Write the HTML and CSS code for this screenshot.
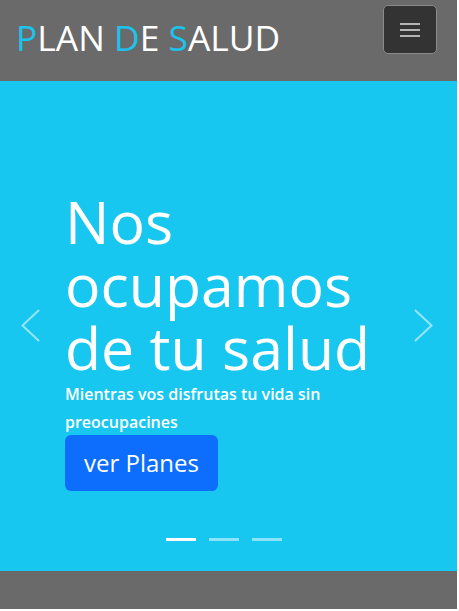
FILE: index.html
```html
<!DOCTYPE html>
<html lang="es">
<head>
<meta charset="utf-8">
<title>Plan de Salud</title>
<link rel="stylesheet" href="styles.css">
</head>
<body>
<div class="page">
  <nav class="navbar">
    <a class="brand" href="#"><span class="hl">P</span>LAN <span class="hl">D</span>E <span class="hl">S</span>ALUD</a>
    <button class="toggler" type="button" aria-label="Menu">
      <svg width="22" height="16" viewBox="0 0 22 16"><path d="M1 2h20M1 8h20M1 14h20" stroke="#b4b4b4" stroke-width="2" fill="none"/></svg>
    </button>
  </nav>
  <section class="hero">
    <button class="ctrl ctrl-prev" type="button" aria-label="Anterior">
      <svg width="19" height="33" viewBox="0 0 19 33"><polyline points="18,1 1.5,16.5 18,32" fill="none" stroke="rgba(255,255,255,0.55)" stroke-width="2"/></svg>
    </button>
    <div class="caption">
      <h1 class="title">Nos ocupamos de tu salud</h1>
      <p class="lead">Mientras vos disfrutas tu vida sin preocupacines</p>
      <a class="btn" href="#">ver Planes</a>
    </div>
    <button class="ctrl ctrl-next" type="button" aria-label="Siguiente">
      <svg width="19" height="33" viewBox="0 0 19 33"><polyline points="1,1 17.5,16.5 1,32" fill="none" stroke="rgba(255,255,255,0.55)" stroke-width="2"/></svg>
    </button>
    <div class="indicators">
      <span class="dot active"></span><span class="dot"></span><span class="dot"></span>
    </div>
  </section>
  <footer class="footer"></footer>
</div>
</body>
</html>
```
FILE: styles.css
```css
html, body {
  margin: 0;
  padding: 0;
  background: #ffffff;
}
.page {
  width: 457px;
  height: 609px;
  display: flex;
  flex-direction: column;
  font-family: "Open Sans", "Liberation Sans", sans-serif;
}
.navbar {
  height: 81px;
  background: #6a6a6a;
  display: flex;
  align-items: flex-start;
  justify-content: space-between;
  padding: 0 20px 0 16px;
  box-sizing: border-box;
}
.brand {
  margin-top: 15px;
  color: #ffffff;
  text-decoration: none;
  font-size: 35.4px;
  line-height: 44px;
}
.hl {
  color: #1cc3ec;
}
.toggler {
  margin-top: 5px;
  width: 54px;
  height: 49px;
  background: #333333;
  border: 1px solid #8a8a8a;
  border-radius: 5px;
  display: flex;
  align-items: center;
  justify-content: center;
  padding: 0;
}
.hero {
  position: relative;
  height: 490px;
  background: #17c7ef;
  display: flex;
  align-items: flex-start;
}
.ctrl {
  box-sizing: border-box;
  width: 65px;
  flex: none;
  align-self: stretch;
  background: none;
  border: 0;
  padding: 0;
  display: flex;
  align-items: center;
  justify-content: flex-start;
}
.ctrl-prev {
  padding-left: 21px;
}
.ctrl-next {
  padding-left: 22px;
}
.ctrl svg {
  margin-top: -1px;
}
.caption {
  flex: 1;
  padding-top: 109px;
  color: #ffffff;
}
.title {
  margin: 0;
  font-size: 59px;
  font-weight: 400;
  line-height: 63px;
}
.lead {
  margin: 0;
  font-size: 16px;
  font-weight: 600;
  line-height: 28px;
  padding-top: 1px;
}
.btn {
  display: inline-block;
  margin-top: -1px;
  background: #0d6efd;
  color: #ffffff;
  text-decoration: none;
  font-size: 24px;
  line-height: 30px;
  padding: 13px 19px;
  border-radius: 6px;
}
.indicators {
  position: absolute;
  left: 0;
  right: 0;
  bottom: 30px;
  display: flex;
  justify-content: center;
  gap: 13px;
  padding-right: 10px;
}
.dot {
  width: 30px;
  height: 3px;
  background: rgba(255, 255, 255, 0.5);
}
.dot.active {
  background: #ffffff;
}
.footer {
  height: 38px;
  background: #6a6a6a;
}
```
